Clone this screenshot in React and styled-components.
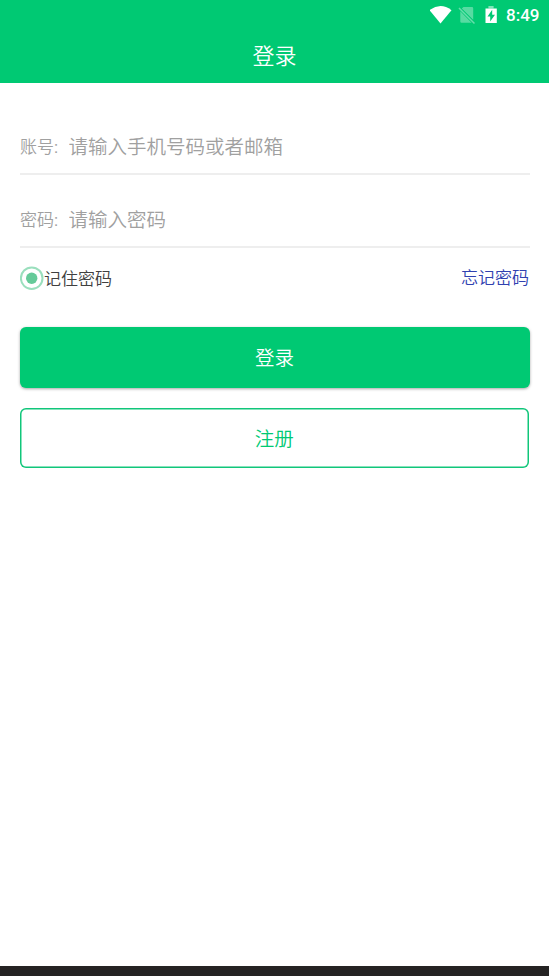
import React from 'react';
import styled, { createGlobalStyle } from 'styled-components';

const GlobalStyle = createGlobalStyle`
  * { box-sizing: border-box; }
  body {
    margin: 0;
    background: #fff;
    font-family: Roboto, "Noto Sans CJK SC DemiLight", "Noto Sans CJK SC", sans-serif;
  }
`;

const Screen = styled.div`
  display: flex;
  flex-direction: column;
  height: 976px;
  background: #fff;
`;

const Header = styled.header`
  height: 83px;
  background: #00c973;
  color: #fff;
`;

const StatusBar = styled.div`
  display: flex;
  align-items: center;
  justify-content: flex-end;
  height: 30px;
  padding-right: 10px;
`;

const StatusIcons = styled.svg`
  display: block;
  width: 70px;
  height: 30px;
`;

const Clock = styled.span`
  width: 33px;
  margin-left: 6px;
  font: 500 17px/30px Roboto, sans-serif;
  white-space: nowrap;
`;

const Title = styled.h1`
  margin: 0;
  font-size: 22px;
  font-weight: 350;
  line-height: 54px;
  text-align: center;
`;

const Form = styled.main`
  display: flex;
  flex: 1;
  flex-direction: column;
  padding: 18px 19px 0 20px;
`;

const Field = styled.label`
  display: flex;
  align-items: center;
  height: ${({ $height }) => $height}px;
  padding-top: ${({ $top }) => $top}px;
  border-bottom: 2px solid #eee;
  color: #a0a0a0;
`;

const FieldName = styled.span`
  width: 48.5px;
  font-size: 17px;
  font-weight: 350;
  line-height: 36px;
`;

const Colon = styled.span`
  font-weight: 400;
`;

const Input = styled.input`
  flex: 1;
  min-width: 0;
  height: 38px;
  padding: 2px 0 0;
  border: 0;
  outline: 0;
  background: transparent;
  font: 350 19.5px Roboto, "Noto Sans CJK SC DemiLight", "Noto Sans CJK SC", sans-serif;
  &::placeholder { color: #a0a0a0; opacity: 1; }
`;

const Options = styled.div`
  display: flex;
  align-items: center;
  justify-content: space-between;
  height: 60px;
  padding-right: 1px;
  font-size: 17px;
  font-weight: 350;
`;

const Remember = styled.div`
  display: flex;
  align-items: center;
  color: #404040;
`;

const RememberText = styled.span`
  padding-bottom: 2px;
`;

const Radio = styled.svg`
  width: 24px;
  height: 24px;
`;

const ForgotLink = styled.a`
  padding-bottom: 4px;
  color: #3041b0;
`;

const Button = styled.button`
  height: ${({ $outlined }) => ($outlined ? '60.5px' : '61px')};
  margin: ${({ $outlined }) => ($outlined ? '19.5px 1px 0 -0.5px' : '19px 0.5px 0 -0.5px')};
  padding: ${({ $outlined }) => ($outlined ? '0' : '0 0 2px')};
  border: 0;
  border-radius: 6px;
  background: ${({ $outlined }) => ($outlined ? '#fff' : '#00c973')};
  box-shadow: ${({ $outlined }) => ($outlined ? 'inset 0 0 0 1.5px #10c67a' : '0 1px 3px rgba(0, 0, 0, .35)')};
  color: ${({ $outlined }) => ($outlined ? '#00c973' : '#fff')};
  font: 350 19.5px Roboto, "Noto Sans CJK SC DemiLight", "Noto Sans CJK SC", sans-serif;
`;

const BottomBar = styled.footer`
  height: 10px;
  background: #252323;
`;

export default function App() {
  return (
    <>
      <GlobalStyle />
      <Screen>
        <Header>
          <StatusBar>
            <StatusIcons viewBox="430 0 70 30" aria-hidden="true">
              <path d="M429.5 10.2Q440.5 2 451.5 10.2L440.5 23.5Z" fill="#fff" />
              <path
                d="M463.5 7H472Q473.2 7 473.2 8.2V19.8L461.8 8.5ZM460.3 11.2L471.6 22.7H461.5Q460.3 22.7 460.3 21.5Z"
                fill="#fff"
                opacity=".34"
              />
              <path d="M459 8L474.5 23.5" stroke="#fff" strokeWidth="1.5" opacity=".4" />
              <path d="M488.4 6H493.6V8.5H488.4Z" fill="#fff" opacity=".5" />
              <path
                d="M485.5 8.5H496.8V23H485.5ZM492.2 9.8L487.5 16.4H490.2V21.6L495 14.7H492.2Z"
                fill="#fff"
                fillRule="evenodd"
              />
            </StatusIcons>
            <Clock>8:49</Clock>
          </StatusBar>
          <Title>登录</Title>
        </Header>
        <Form>
          <Field $height={74} $top={19}>
            <FieldName>账号<Colon>:</Colon></FieldName>
            <Input placeholder="请输入手机号码或者邮箱" />
          </Field>
          <Field $height={73} $top={18}>
            <FieldName>密码<Colon>:</Colon></FieldName>
            <Input type="password" placeholder="请输入密码" />
          </Field>
          <Options>
            <Remember>
              <Radio viewBox="0 0 24 24" aria-hidden="true">
                <circle cx="11.7" cy="12.2" r="10.8" fill="none" stroke="#9adfbd" strokeWidth="2" />
                <circle cx="11.7" cy="12.2" r="5.7" fill="#65ca99" />
              </Radio>
              <RememberText>记住密码</RememberText>
            </Remember>
            <ForgotLink>忘记密码</ForgotLink>
          </Options>
          <Button type="submit">登录</Button>
          <Button type="button" $outlined>注册</Button>
        </Form>
        <BottomBar />
      </Screen>
    </>
  );
}
